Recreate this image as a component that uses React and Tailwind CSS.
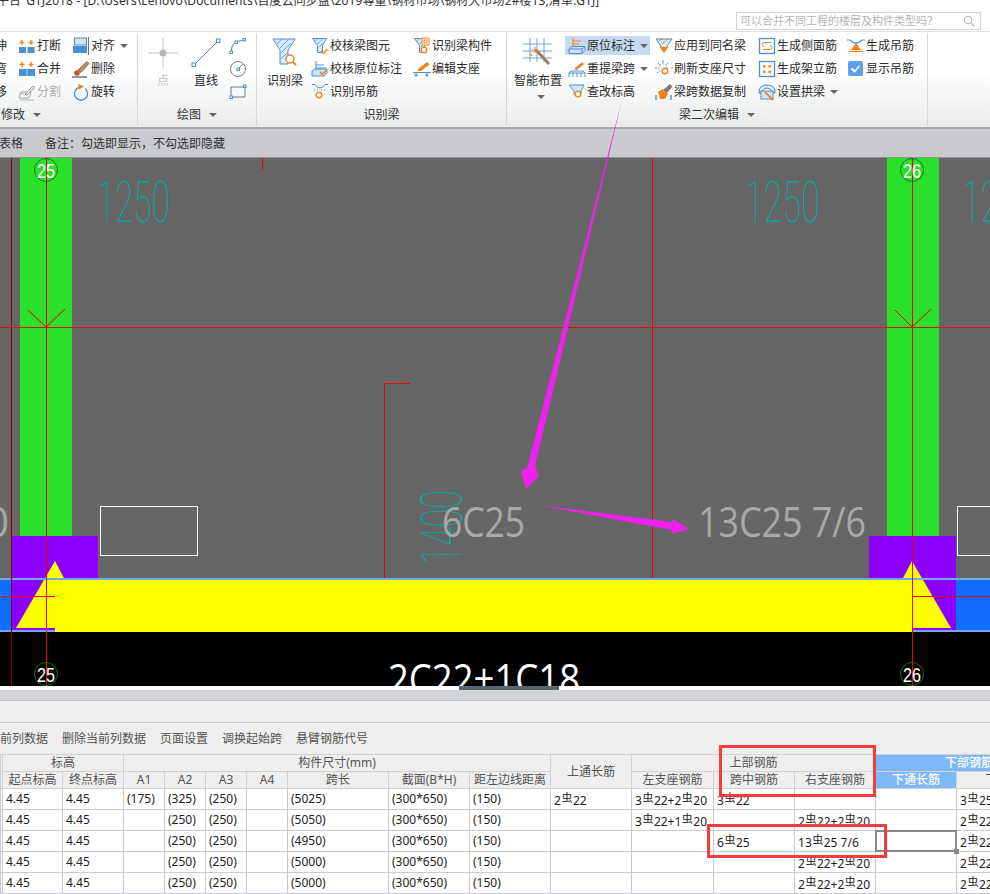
const BLUE = "#4a90d9";
const ORANGE = "#f0851f";

function Svg({ size = 18, box = 18, children }) {
  return (
    <svg width={size} height={size} viewBox={`0 0 ${box} ${box}`} fill="none" className="shrink-0">
      {children}
    </svg>
  );
}

const Mag = ({ x = 12, y = 13 }) => (
  <g stroke={ORANGE} strokeWidth="1.4">
    <circle cx={x} cy={y} r="2.8" fill="#fff" />
    <path d={`M${x + 2} ${y + 2}l2.5 2.5`} strokeWidth="2" />
  </g>
);

const Check = ({ x = 10, y = 14 }) => (
  <path d={`M${x} ${y}l2.5 2.5l4-4.5`} stroke={ORANGE} strokeWidth="1.5" />
);

const Funnel = () => (
  <g stroke={BLUE}>
    <path d="M1.5 1.5h14l-4 7v7h-5v-7z" fill="#dce9f7" />
    <path d="M4 4.5l3-3M6.5 7l5.5-5.5M8 10l3.5-3.5" strokeWidth=".8" />
  </g>
);

const icons = {
  daduan: (
    <Svg>
      <path d="M4 3v5M1.5 5.5h5M13 3v5M10.5 5.5h5" stroke={ORANGE} strokeWidth="1.4" />
      <rect x="1" y="10" width="7" height="6" fill={BLUE} />
      <rect x="9.5" y="10" width="7" height="6" fill={BLUE} />
    </Svg>
  ),
  hebing: (
    <Svg>
      <path d="M4 2v5M1.5 4.5h5M13 2v5M10.5 4.5h5" stroke={ORANGE} strokeWidth="1.4" />
      <rect x="1" y="9" width="16" height="7" fill={BLUE} />
      <path d="M9 9v7" stroke="#a9cbee" />
    </Svg>
  ),
  fenge: (
    <Svg>
      <path d="M3 9h10l-2 6H1z" stroke="#a5a5a5" />
      <path d="M7 11l8-8l2 1.5l-8 7.5z" stroke="#9a9a9a" fill="#e6e6e6" />
      <path d="M1 11h5M2 17h14" stroke="#b5b5b5" />
    </Svg>
  ),
  duiqi: (
    <Svg>
      <rect x="2.5" y="1" width="12" height="7" fill="#d3e3f5" stroke={BLUE} />
      <rect x="1" y="9" width="14" height="7" fill={BLUE} />
      <path d="M16.5 0v18" stroke="#777" />
    </Svg>
  ),
  shanchu: (
    <Svg>
      <path d="M6 10l9-8.5l2 2l-8 9z" fill="#b9905f" stroke="#6b4a2a" strokeWidth=".7" />
      <circle cx="5" cy="13" r="2.8" fill="#c65a2a" />
      <path d="M0 17h15" stroke="#333" />
    </Svg>
  ),
  xuanzhuan: (
    <Svg>
      <path d="M7 4.5a6.5 6.5 0 1 0 6 1" stroke={BLUE} strokeWidth="1.4" />
      <path d="M6.5 1l5.5 2.5l-5.5 3z" fill={ORANGE} />
    </Svg>
  ),
  hudu: (
    <Svg>
      <path d="M2.5 15v-3q1-6 6-7.5l6-1.5" stroke="#6d7f90" />
      <g fill="#fff" stroke={BLUE}>
        <rect x="1" y="14" width="2.5" height="2.5" />
        <rect x="6" y="4" width="2.5" height="2.5" />
        <rect x="14" y="1.5" width="2.5" height="2.5" />
      </g>
    </Svg>
  ),
  yuan: (
    <Svg>
      <circle cx="9" cy="9" r="7.5" stroke="#6d7f90" />
      <path d="M9 9l5-5" stroke="#6d7f90" />
      <rect x="8" y="8" width="2.5" height="2.5" fill="#fff" stroke={BLUE} />
    </Svg>
  ),
  juxing: (
    <Svg>
      <path d="M2 4h14v10H2z" stroke="#6d7f90" />
      <rect x="14.5" y="2" width="2.5" height="2.5" fill="#fff" stroke={BLUE} />
      <rect x="1" y="13" width="2.5" height="2.5" fill="#fff" stroke={BLUE} />
    </Svg>
  ),
  jiaohe: (
    <Svg>
      <Funnel />
      <Check />
    </Svg>
  ),
  jiaoheYuan: (
    <Svg>
      <path d="M5 1v8M5 5h8M5 8h10" stroke={BLUE} />
      <path d="M1 11l3-2h12v4l-3 3H1z" fill="#cfe1f4" stroke={BLUE} />
      <Check x="9" y="12" />
    </Svg>
  ),
  diaojin: (
    <Svg>
      <path d="M1 1.5h3M14 1.5h3M4 1.5q5 7 10 0" stroke={BLUE} />
      <path d="M3 7h1M6 7h1M10 7h1M13 7h1" stroke="#777" />
      <Mag x="8" y="12" />
    </Svg>
  ),
  goujian: (
    <Svg>
      <Funnel />
      <rect x="9" y="1" width="7" height="7" fill="#fff" stroke={ORANGE} />
      <rect x="11" y="3" width="3" height="3" stroke={ORANGE} />
      <Mag x="11" y="13" />
    </Svg>
  ),
  zhizuo: (
    <Svg>
      <path d="M5 9l9-7l2.5 2.5l-8.5 6.5H5z" fill={ORANGE} />
      <path d="M0 12.5h18M3 12.5V17M14 12.5V17M1 15h4M12 15h4" stroke={BLUE} />
    </Svg>
  ),
  yuanwei: (
    <Svg>
      <path d="M5 1v8M5 4h8M5 7h6" stroke={ORANGE} strokeWidth="1.2" />
      <path d="M1 12l3-2.5h13v4L14 16.5H1z" fill="#cfe1f4" stroke={BLUE} />
      <path d="M1 12h13v4.5M14 12l3-2.5" stroke={BLUE} />
    </Svg>
  ),
  chongti: (
    <Svg>
      <path d="M6 9l8-7l2 2l-7 6z" fill={ORANGE} />
      <path d="M1 17v-4l2-2h12l2 2v4M1 13h16M5 13v4M13 13v4M9 13v4" stroke={BLUE} />
    </Svg>
  ),
  chagai: (
    <Svg>
      <path d="M1 2h15l-3 6v3H6V8z" fill="#d5e5f6" stroke={BLUE} />
      <Mag x="10" y="11" />
    </Svg>
  ),
  yingyong: (
    <Svg>
      <path d="M1 2h16l-5 7v2H6V9z" fill="#e4eef9" stroke="#5a7fa8" />
      <path d="M4 4l3-2M7 7l6-5" stroke="#5a7fa8" strokeWidth=".7" />
      <path d="M4.5 10h9L9 16z" fill={ORANGE} />
    </Svg>
  ),
  shuaxin: (
    <Svg>
      <path d="M8 0v3M2 8H0M16 8h2M3 3l1.5 1.5M13 3l-1.5 1.5M2 13l1.5-1" stroke={BLUE} />
      <circle cx="8" cy="8" r="4.2" stroke="#7f9dbd" strokeDasharray="2 1" />
      <Mag x="10" y="11" />
    </Svg>
  ),
  fuzhi: (
    <Svg>
      <path d="M8 7l7-6l2.5 2.5l-6 7z" fill="#7b7b7b" />
      <path d="M3 9l5-3l5 5l-3 5H5z" fill={ORANGE} />
      <path d="M1 17v-5M16 17v-5" stroke={BLUE} strokeWidth="1.4" />
    </Svg>
  ),
  cemian: (
    <Svg>
      <rect x="1.5" y="1.5" width="15" height="15" stroke={BLUE} strokeWidth="1.3" />
      <path d="M13 5.5H6q-2 0-2 2t2 2M5 12.5h7q2 0 2-2t-2-2" stroke={ORANGE} />
    </Svg>
  ),
  jiali: (
    <Svg>
      <rect x="1.5" y="1.5" width="15" height="15" stroke={BLUE} strokeWidth="1.3" />
      <path d="M5 5h2.5v2.5H5zM10.5 5H13v2.5h-2.5zM5 10.5h2.5V13H5zM10.5 10.5H13V13h-2.5z" fill={ORANGE} />
    </Svg>
  ),
  gongliang: (
    <Svg>
      <path d="M1 8q1-6 8-6t8 6v2h-3V8q-2-3-5-3T4 8v2H1z" fill="#e4eef9" stroke="#4f7fae" />
      <rect x="3" y="8" width="12" height="8" fill="#d5e5f6" stroke={BLUE} />
      <path d="M7 9l8 8" stroke={ORANGE} strokeWidth="2" />
    </Svg>
  ),
  shengcheng: (
    <Svg>
      <path d="M0 3h3q6 6 12 0h3" stroke={BLUE} strokeWidth="1.2" />
      <path d="M9 6l5 7H4z" fill={ORANGE} />
      <path d="M2 14.5h14" stroke={ORANGE} strokeWidth="1.4" />
    </Svg>
  ),
  xianshi: (
    <Svg>
      <rect x="1" y="1" width="15" height="15" rx="2" fill="#5ba0ea" />
      <path d="M4.5 8.5l3 3l5-5.5" stroke="#fff" strokeWidth="1.8" />
    </Svg>
  ),
};

function Caret() {
  return <span className="ml-[5px] w-0 h-0 border-x-[4px] border-t-[4px] border-x-transparent border-t-[#666]" />;
}

function Item({ icon, text, caret, gray }) {
  return (
    <div className="flex items-center h-[23px] whitespace-nowrap">
      <span className="flex items-center mr-px">{icons[icon]}</span>
      <span className={gray ? "text-[#b0b0b0]" : "text-[#2b2b2b]"}>{text}</span>
      {caret && <Caret />}
    </div>
  );
}

function Big({ icon, text, gray, width = "w-[40px]", caret }) {
  return (
    <div className={`flex flex-col items-center whitespace-nowrap ${width}`}>
      <div className="h-[37px] flex items-center justify-center">{icon}</div>
      <span className={`h-[20px] leading-[20px] ${gray ? "text-[#bdbdbd]" : "text-[#2b2b2b]"}`}>{text}</span>
      {caret && <span className="mt-[4px] flex"><Caret /></span>}
    </div>
  );
}

function Group({ width, label, caret, left, children }) {
  return (
    <div className={`${width} shrink-0 flex flex-col h-[92px] border-r border-[#d5d7d9]`}>
      <div className="h-[73px] flex pt-px">{children}</div>
      <div className={`flex items-center h-[20px] text-[#333] ${left ? "pl-px" : "justify-center"}`}>
        {label}
        {caret && <span className="flex ml-[3px]"><Caret /></span>}
      </div>
    </div>
  );
}

function Ribbon() {
  return (
    <div className="h-[98px] border-t border-[#dfe0e1] border-b-2 border-b-[#a8aaad] bg-linear-to-b from-white from-40% to-[#e9ebeb] flex text-[12px] pt-px">
      <Group width="w-[138px]" label="修改" caret left>
        <div className="-ml-[5px] w-[23px] text-[#2b2b2b]">
          <div className="h-[23px] leading-[23px]">伸</div>
          <div className="h-[23px] leading-[23px]">弯</div>
          <div className="h-[23px] leading-[23px]">移</div>
        </div>
        <div className="w-[54px]">
          <Item icon="daduan" text="打断" />
          <Item icon="hebing" text="合并" />
          <Item icon="fenge" text="分割" gray />
        </div>
        <div>
          <Item icon="duiqi" text="对齐" caret />
          <Item icon="shanchu" text="删除" />
          <Item icon="xuanzhuan" text="旋转" />
        </div>
      </Group>

      <Group width="w-[119px]" label="绘图" caret>
        <div className="ml-[5px]">
          <Big
            gray
            text="点"
            icon={
              <svg width="32" height="32" viewBox="0 0 32 32" fill="none">
                <path d="M1 16h30M16 1v30" stroke="#c4c4c4" />
                <circle cx="16" cy="16" r="3.5" fill="#b5b5b5" />
              </svg>
            }
          />
        </div>
        <div className="ml-[3px]">
          <Big
            text="直线"
            icon={
              <svg width="30" height="30" viewBox="0 0 30 30" fill="none">
                <path d="M3 27L27 3" stroke="#6d7f90" />
                <rect x="1" y="25" width="3.5" height="3.5" fill="#fff" stroke={BLUE} />
                <rect x="25.5" y="1" width="3.5" height="3.5" fill="#fff" stroke={BLUE} />
              </svg>
            }
          />
        </div>
        <div className="ml-[3px]">
          <div className="h-[23px] flex items-center">{icons.hudu}</div>
          <div className="h-[23px] flex items-center">{icons.yuan}</div>
          <div className="h-[23px] flex items-center">{icons.juxing}</div>
        </div>
      </Group>

      <Group width="w-[250px]" label="识别梁">
        <div className="ml-[8px]">
          <Big
            text="识别梁"
            icon={
              <svg width="26" height="30" viewBox="0 0 26 30" fill="none">
                <path d="M1 1h22l-7 11v14H8V12z" fill="#dce9f7" stroke={BLUE} />
                <path d="M5 6l5-5M8 10l9-9M9 15l10-10M9 21l7-7" stroke={BLUE} strokeWidth=".8" />
                <circle cx="18" cy="21" r="4" fill="#fff" stroke={ORANGE} strokeWidth="1.4" />
                <path d="M21 24l3 3" stroke={ORANGE} strokeWidth="2" />
              </svg>
            }
          />
        </div>
        <div className="ml-[6px] w-[102px]">
          <Item icon="jiaohe" text="校核梁图元" />
          <Item icon="jiaoheYuan" text="校核原位标注" />
          <Item icon="diaojin" text="识别吊筋" />
        </div>
        <div>
          <Item icon="goujian" text="识别梁构件" />
          <Item icon="zhizuo" text="编辑支座" />
        </div>
      </Group>

      <Group width="w-[421px]" label="梁二次编辑" caret>
        <div className="ml-[6px]">
          <Big
            caret
            width="w-[50px]"
            text="智能布置"
            icon={
              <svg width="32" height="32" viewBox="0 0 32 32" fill="none">
                <path d="M8 1v24M15 1v24M22 1v24M1 7h29M1 14h29M1 21h29" stroke={BLUE} strokeWidth=".8" />
                <path d="M14 13l13 14" stroke="#a87a4d" strokeWidth="3" />
                <path d="M13 10v6M10 13h6M8 17l2 2" stroke={ORANGE} strokeWidth="1.2" />
              </svg>
            }
          />
        </div>
        <div className="w-[90px] ml-[2px]">
          <div className="w-[85px]">
            <div className="flex items-center h-[19px] my-[2px] pl-[3px] bg-[#c6d9ef] whitespace-nowrap">
              <span className="flex mr-px">{icons.yuanwei}</span>
              <span className="text-[#2b2b2b]">原位标注</span>
              <Caret />
            </div>
          </div>
          <div className="pl-[3px]">
            <Item icon="chongti" text="重提梁跨" caret />
            <Item icon="chagai" text="查改标高" />
          </div>
        </div>
        <div className="w-[103px]">
          <Item icon="yingyong" text="应用到同名梁" />
          <Item icon="shuaxin" text="刷新支座尺寸" />
          <Item icon="fuzhi" text="梁跨数据复制" />
        </div>
        <div className="w-[89px]">
          <Item icon="cemian" text="生成侧面筋" />
          <Item icon="jiali" text="生成架立筋" />
          <Item icon="gongliang" text="设置拱梁" caret />
        </div>
        <div>
          <Item icon="shengcheng" text="生成吊筋" />
          <Item icon="xianshi" text="显示吊筋" />
        </div>
      </Group>
    </div>
  );
}

const CYAN = "#0aa5a5";

function CadText({ x, y, len, children, size = 58, transform }) {
  return (
    <text
      x={x}
      y={y}
      transform={transform}
      fontSize={size}
      fontWeight="100"
      textLength={len}
      lengthAdjust="spacingAndGlyphs"
      fill={CYAN}
      fontFamily="Roboto"
    >
      {children}
    </text>
  );
}

function Label({ x, y, len, size = 42, fill = "#a8a8a8", children }) {
  return (
    <text x={x} y={y} fontSize={size} textLength={len} lengthAdjust="spacingAndGlyphs" fill={fill} fontFamily="Open Sans">
      {children}
    </text>
  );
}

function Bubble({ x, y, text }) {
  return (
    <g>
      <circle cx={x} cy={y} r="11.5" stroke="#0a7a14" strokeWidth="1" fill="none" />
      <text x={x - 9} y={y + 8} fontSize="21" textLength="18" lengthAdjust="spacingAndGlyphs" fill="#fff" fontFamily="Liberation Sans">
        {text}
      </text>
    </g>
  );
}

// the drawing area of the CAD view, in page coordinates
function Canvas() {
  return (
    <svg width="990" height="528" viewBox="0 158 990 528" className="block bg-[#666666]">
      <rect x="0" y="632" width="990" height="54" fill="#000" />

      <rect x="20" y="158" width="52" height="378" fill="#2be02b" />
      <rect x="887" y="158" width="52" height="378" fill="#2be02b" />

      <rect x="12" y="536" width="86" height="94" fill="#8c00ff" />
      <rect x="869" y="536" width="87" height="94" fill="#8c00ff" />
      <rect x="0" y="580" width="12" height="50" fill="#0f6eff" />
      <rect x="956" y="580" width="34" height="50" fill="#0f6eff" />

      <rect x="55" y="580" width="857" height="52" fill="#ffff00" />
      <rect x="98" y="536" width="771" height="42" fill="#666666" />
      <polygon points="55,561 65,580 55,628 16,628" fill="#ffff00" />
      <polygon points="912,561 951,628 912,628 902,580" fill="#ffff00" />
      <rect x="0" y="578" width="990" height="2" fill="#72a9ee" />
      <rect x="0" y="630" width="55" height="2" fill="#72a9ee" />
      <rect x="912" y="630" width="78" height="2" fill="#72a9ee" />

      <rect x="100.5" y="506.5" width="97" height="49" fill="none" stroke="#fff" />
      <rect x="957.5" y="506.5" width="60" height="49" fill="none" stroke="#fff" />

      <CadText x="97" y="222" len="73">1250</CadText>
      <CadText x="745" y="222" len="75">1250</CadText>
      <CadText x="962" y="222" len="75">1250</CadText>
      <CadText x="0" y="0" len="75" transform="translate(462,565) rotate(-90)">1400</CadText>

      <g shapeRendering="crispEdges" stroke="#f00000">
        <path d="M46.5 158v528M912.5 158v528M652.5 158v420M262.5 158v12M384.5 383v195M384 383.5h26" />
        <path d="M0 327.5h990M0 596.5h55M912 596.5h78" />
        <path d="M11.5 158v528" stroke="#8a0000" />
      </g>
      <path d="M28 310l18 17l19-18M895 310l17 17l19-18" stroke="#f00000" fill="none" />

      <Label x="-14" y="537" len="23">0</Label>
      <Label x="442" y="537" len="83">6C25</Label>
      <Label x="698" y="537" len="168">13C25 7/6</Label>
      <Label x="388" y="694" len="192" size="42" fill="#ffffff">2C22+1C18</Label>

      <Bubble x={46} y={170} text="25" />
      <Bubble x={912} y={170} text="26" />
      <Bubble x={46} y={674} text="25" />
      <Bubble x={912} y={674} text="26" />
    </svg>
  );
}

function Rebar({ text }) {
  if (!text) return null;
  const parts = text.split("#");
  return (
    <>
      {parts.map((p, i) => (
        <span key={i}>
          {i > 0 && <span className="inline-block w-[12px] text-center text-[11px] leading-none align-[3px]">虫</span>}
          {p}
        </span>
      ))}
    </>
  );
}

const widths = [2, 60, 61, 41, 41, 41, 41, 101, 81, 81, 81, 82, 81, 81, 81, 106];

const rows = [
  ["4.45", "4.45", "(175)", "(325)", "(250)", "", "(5025)", "(300*650)", "(150)", "2#22", "3#22+2#20", "3#22", "", "", "3#25+2#22"],
  ["4.45", "4.45", "", "(250)", "(250)", "", "(5050)", "(300*650)", "(150)", "", "3#22+1#20", "", "2#22+2#20", "", "2#22+2#20"],
  ["4.45", "4.45", "", "(250)", "(250)", "", "(4950)", "(300*650)", "(150)", "", "", "6#25", "13#25 7/6", "", "2#22+2#20"],
  ["4.45", "4.45", "", "(250)", "(250)", "", "(5000)", "(300*650)", "(150)", "", "", "", "2#22+2#20", "", "2#22+2#20"],
  ["4.45", "4.45", "", "(250)", "(250)", "", "(5000)", "(300*650)", "(150)", "", "", "", "2#22+2#20", "", "2#22+2#20"],
];

const th = "border border-[#cfd1d4] bg-[#eeeeee] font-normal text-[#555] p-0 text-center leading-none whitespace-nowrap";
const thBlue = "border border-[#cfd1d4] bg-[#7db8f8] font-medium text-white p-0 leading-none";

function DataTable() {
  return (
    <div className="h-[140px] overflow-hidden bg-white">
      <table className="table-fixed w-[1062px] text-[12px] border-collapse">
        <colgroup>
          {widths.map((w, i) => (
            <col key={i} style={{ width: w }} />
          ))}
        </colgroup>
        <thead>
          <tr className="h-[17px]">
            <th className={th} rowSpan={2} />
            <th className={th} colSpan={2}>标高</th>
            <th className={th} colSpan={7}>构件尺寸(mm)</th>
            <th className={th} rowSpan={2}>上通长筋</th>
            <th className={th} colSpan={3}>上部钢筋</th>
            <th className={thBlue} colSpan={2}>下部钢筋</th>
          </tr>
          <tr className="h-[17px]">
            {["起点标高", "终点标高", "A1", "A2", "A3", "A4", "跨长", "截面(B*H)", "距左边线距离", "左支座钢筋", "跨中钢筋", "右支座钢筋"].map((h) => (
              <th key={h} className={th}>{h}</th>
            ))}
            <th className={thBlue}>下通长筋</th>
            <th className={th}>下部钢筋</th>
          </tr>
        </thead>
        <tbody>
          {rows.map((r, i) => (
            <tr key={i} className="h-[21px]">
              <td className="border border-[#c8cacf] p-0" />
              {r.map((c, j) => (
                <td
                  key={j}
                  className="relative border border-[#c8cacf] p-0 pl-[3px] text-[#222] whitespace-nowrap leading-none"
                >
                  <Rebar text={c} />
                  {i === 2 && j === 13 && (
                    <span className="absolute -inset-px border-2 border-[#888888]">
                      <span className="absolute -right-[4px] -bottom-[4px] w-[5px] h-[5px] bg-[#888888]" />
                    </span>
                  )}
                </td>
              ))}
            </tr>
          ))}
        </tbody>
      </table>
    </div>
  );
}

export default function App() {
  return (
    <div className="relative w-[990px] h-[894px] overflow-hidden bg-white text-[12px] font-['Noto_Sans','Noto_Sans_CJK_SC',sans-serif]">
      <div className="h-[31px]">
        <div className="h-[8px] overflow-hidden">
          <div className="-mt-[5px] -ml-[3px] text-[12px] leading-[12px] tracking-[.1px] text-[#333] whitespace-nowrap">
            平台<span className="ml-[5px]">GTJ2018 - [D:\Users\Lenovo\Documents\百度云同步盘\2019尋量\钢材市场\钢材大市场2#楼13,清单.GTJ]</span>
          </div>
        </div>
        <div className="flex justify-end pr-[9px] mt-[4px]">
          <div className="w-[245px] h-[18px] border border-[#d4d4d4] flex items-center justify-between pl-[3px] pr-[5px] text-[#b5b5b5] text-[11px]">
            <span>可以合并不同工程的楼层及构件类型吗？</span>
            <svg width="12" height="12" viewBox="0 0 12 12" fill="none" stroke="#b5b5b5">
              <circle cx="5" cy="5" r="3.8" />
              <path d="M8 8l3.5 3.5" strokeWidth="1.4" />
            </svg>
          </div>
        </div>
      </div>

      <Ribbon />

      <div className="h-[29px] pt-px bg-[#c8cacd] border-b border-[#8f9193] flex items-center text-[#333] whitespace-nowrap">
        <span className="-ml-px">表格</span>
        <span className="ml-[22px]">备注：勾选即显示，不勾选即隐藏</span>
      </div>

      <Canvas />

      <div className="relative h-[4px] bg-white">
        <div className="absolute left-[459px] top-0 w-[100px] h-[4px] bg-[#5b6671]" />
      </div>
      <div className="h-[11px] bg-[#d3d4d8] border-b border-[#bfc0c3]" />
      <div className="h-[22px] bg-[#eeeeee] border-b border-[#c9cacc]" />
      <div className="h-[31px] pt-px bg-[#eeeeee] flex items-center gap-[14px] text-[#555] whitespace-nowrap">
        <span>前列数据</span>
        <span>删除当前列数据</span>
        <span>页面设置</span>
        <span>调换起始跨</span>
        <span>悬臂钢筋代号</span>
      </div>

      <DataTable />

      {/* annotations drawn over the screenshot */}
      <svg width="990" height="894" className="absolute inset-0 pointer-events-none">
        <polygon points="622,100 535,466 539,476 526,489 521,471 527,468" fill="#f020f0" />
        <polygon points="538,505 672,522 673,519 689,529 672,534 672,530" fill="#f020f0" />
      </svg>
      <div className="absolute left-[719px] top-[745px] w-[157px] h-[52px] border-[3px] border-[#f53b3b]" />
      <div className="absolute left-[707px] top-[824px] w-[180px] h-[34px] border-[3px] border-[#f53b3b]" />
    </div>
  );
}
